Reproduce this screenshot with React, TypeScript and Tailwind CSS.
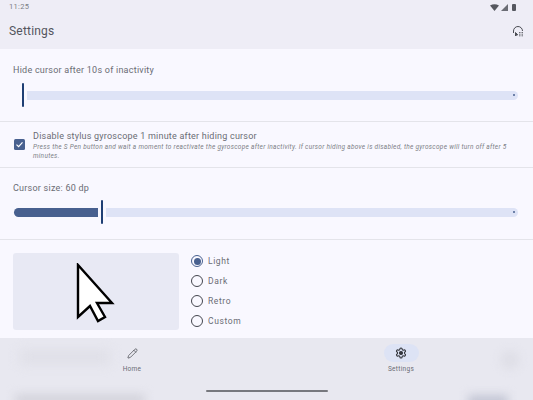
import { Pencil } from 'lucide-react';

function Slider({ fill, thumb }: { fill: number; thumb: number }) {
  return (
    <div className="flex items-center h-[24px]">
      {fill > 0 && <div className="h-[9px] bg-[#48608f] rounded-l-full rounded-r-[1px]" style={{ width: fill }} />}
      <div className="w-[2px] h-[24px] bg-[#1f3f74] rounded-full" style={{ marginLeft: thumb }} />
      <div className="flex-1 h-[9px] ml-[3px] bg-[#dee3f6] rounded-r-full rounded-l-[1px] flex items-center justify-end pr-[3px]">
        <div className="w-[2px] h-[2px] rounded-full bg-[#48608f]" />
      </div>
    </div>
  );
}

function Radio({ label, checked }: { label: string; checked?: boolean }) {
  return (
    <div className="flex items-center h-[20px] gap-[5px] ml-[1px]">
      <div className={`w-[12px] h-[12px] rounded-full border flex items-center justify-center ${checked ? 'border-[#48608f]' : 'border-[#44464f]'}`}>
        {checked && <div className="w-[7px] h-[7px] rounded-full bg-[#48608f]" />}
      </div>
      <span className="text-[8.5px] tracking-[0.6px] text-[#6a6c74]">{label}</span>
    </div>
  );
}

export default function App() {
  return (
    <div className="w-[533px] h-[400px] relative overflow-hidden bg-[#f9f8ff] text-[#44464f]" style={{ fontFamily: 'Roboto, sans-serif' }}>
      <header className="h-[49px] bg-[#eeedf6] px-[9px]">
        <div className="flex items-center justify-between h-[13px] pt-[1px]">
          <span className="text-[7.5px] tracking-[0.3px] text-[#7b7d85]">11:25</span>
          <div className="flex items-center gap-[2px] mr-[8px]">
            <svg width="9" height="7" viewBox="0 0 9 7"><path d="M0 1.5Q4.5-1 9 1.5L4.5 7Z" fill="#55575f" /></svg>
            <svg width="7" height="7" viewBox="0 0 7 7"><path d="M7 0V7H0Z" fill="#6b6d75" /></svg>
            <div className="ml-[2px] w-[4px] h-[7px] bg-[#55575f] rounded-[1px]" />
          </div>
        </div>
        <div className="flex items-center justify-between h-[36px] pb-[1px]">
          <h1 className="text-[12px] tracking-[0.2px] text-[#53555d] font-normal">Settings</h1>
          <svg width="12" height="12" viewBox="0 0 12 12" fill="none" stroke="#4a4c53" strokeWidth="1">
            <path d="M1.5 8V6a4.5 4.5 0 0 1 9 0" />
            <path d="M3.5 7.5v3.5l1-1 1.2-.2z" fill="#4a4c53" />
            <path d="M7 7.5h4M7 9.2h4M7 10.8h4" strokeDasharray="1 .5" strokeWidth=".8" />
          </svg>
        </div>
      </header>

      <section className="h-[73px] border-b border-[#e4e4ea] pl-[13px] pr-[15px] pt-[15px]">
        <p className="text-[9px] leading-[12px] tracking-[0.24px] text-[#6a6c74]">Hide cursor after 10s of inactivity</p>
        <div className="mt-[7px]">
          <Slider fill={0} thumb={9} />
        </div>
      </section>

      <section className="h-[46px] border-b border-[#e4e4ea] pl-[14px] pr-[10px] flex items-center gap-[8px]">
        <div className="w-[11px] h-[11px] rounded-[1.5px] bg-[#48608f] flex items-center justify-center shrink-0">
          <svg width="9" height="9" viewBox="0 0 9 9" fill="none" stroke="#fff" strokeWidth="1.2"><path d="M1.5 4.6 3.6 6.6 7.5 2.4" /></svg>
        </div>
        <div className="mt-[2px]">
          <p className="text-[9px] leading-[11px] tracking-[0.22px] text-[#6a6c74]">Disable stylus gyroscope 1 minute after hiding cursor</p>
          <p className="mt-[1px] text-[6.5px] leading-[9px] italic tracking-[0.28px] text-[#7d7f86]">Press the S Pen button and wait a moment to reactivate the gyroscope after inactivity. If cursor hiding above is disabled, the gyroscope will turn off after 5 minutes.</p>
        </div>
      </section>

      <section className="h-[72px] border-b border-[#e4e4ea] pl-[14px] pr-[15px] pt-[14px]">
        <p className="-ml-[1px] text-[9px] leading-[12px] tracking-[0.24px] text-[#6a6c74]">Cursor size: 60 dp</p>
        <div className="mt-[6px]">
          <Slider fill={84} thumb={3} />
        </div>
      </section>

      <section className="flex pl-[13px] pt-[13px] gap-[11px]">
        <div className="w-[166px] h-[77px] bg-[#e8e9f4] rounded-[3px] flex items-start justify-center pt-[10px] pr-[2px]">
          <svg width="40" height="60" viewBox="0 0 40 60">
            <path d="M3 2V54L15 43 23 58 30 54 22 40H37Z" fill="#fff" stroke="#000" strokeWidth="2.4" strokeLinejoin="miter" />
          </svg>
        </div>
        <div className="-mt-[2px]">
          <Radio label="Light" checked />
          <Radio label="Dark" />
          <Radio label="Retro" />
          <Radio label="Custom" />
        </div>
      </section>

      <nav className="absolute left-0 right-0 bottom-0 h-[62px] bg-[#e8e8f0] overflow-hidden">
        {/* blurred content scrolling behind the bar */}
        <div className="absolute left-[20px] top-[12px] w-[90px] h-[14px] bg-[#dfdfe7] blur-[6px]" />
        <div className="absolute left-[15px] top-[56px] w-[130px] h-[12px] bg-[#d4d4dc] blur-[5px]" />
        <div className="absolute left-[500px] top-[12px] w-[20px] h-[20px] rounded-full bg-[#dfdfe7] blur-[4px]" />
        <div className="absolute left-[468px] top-[57px] w-[40px] h-[14px] bg-[#c4c7d5] blur-[5px]" />

        <div className="absolute left-[115px] top-[8px] w-[34px] flex flex-col items-center">
          <div className="h-[14px] flex items-center">
            <Pencil size={11} strokeWidth={1.5} color="#3f4148" />
          </div>
          <span className="mt-[5px] text-[6.5px] leading-[8px] tracking-[0.3px] text-[#6a6c74]">Home</span>
        </div>
        <div className="absolute left-[383px] top-[6px] w-[36px] flex flex-col items-center">
          <div className="w-[35px] h-[18px] rounded-full bg-[#dde3f5] flex items-center justify-center">
            <svg width="12" height="12" viewBox="0 0 24 24" fill="none" stroke="#33353c" strokeWidth="2.2">
              <path d="M12.22 2h-.44a2 2 0 0 0-2 2v.18a2 2 0 0 1-1 1.73l-.43.25a2 2 0 0 1-2 0l-.15-.08a2 2 0 0 0-2.73.73l-.22.38a2 2 0 0 0 .73 2.73l.15.1a2 2 0 0 1 1 1.72v.51a2 2 0 0 1-1 1.74l-.15.09a2 2 0 0 0-.73 2.73l.22.38a2 2 0 0 0 2.73.73l.15-.08a2 2 0 0 1 2 0l.43.25a2 2 0 0 1 1 1.73V20a2 2 0 0 0 2 2h.44a2 2 0 0 0 2-2v-.18a2 2 0 0 1 1-1.73l.43-.25a2 2 0 0 1 2 0l.15.08a2 2 0 0 0 2.73-.73l.22-.39a2 2 0 0 0-.73-2.73l-.15-.08a2 2 0 0 1-1-1.74v-.5a2 2 0 0 1 1-1.74l.15-.09a2 2 0 0 0 .73-2.73l-.22-.38a2 2 0 0 0-2.73-.73l-.15.08a2 2 0 0 1-2 0l-.43-.25a2 2 0 0 1-1-1.73V4a2 2 0 0 0-2-2z" />
              <circle cx="12" cy="12" r="3" fill="#33353c" />
            </svg>
          </div>
          <span className="mt-[3px] text-[6.5px] leading-[8px] tracking-[0.3px] text-[#6a6c74]">Settings</span>
        </div>
        <div className="absolute left-[206px] top-[52px] w-[122px] h-[2px] rounded-full bg-[#77787e]" />
      </nav>
    </div>
  );
}
